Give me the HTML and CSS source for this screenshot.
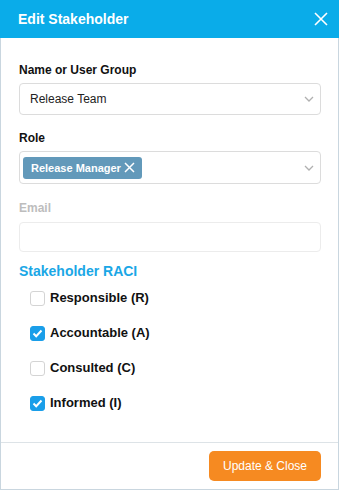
FILE: index.html
```html
<!DOCTYPE html>
<html>
<head>
<meta charset="utf-8">
<link rel="stylesheet" href="styles.css">
</head>
<body>
<div class="modal">
  <div class="header">
    <span class="title">Edit Stakeholder</span>
    <svg class="close" width="14" height="14" viewBox="0 0 14 14"><path d="M1 1L13 13M13 1L1 13" stroke="#fff" stroke-width="1.6" fill="none"/></svg>
  </div>
  <div class="content">
    <div class="label">Name or User Group</div>
    <div class="select">
      <span class="value">Release Team</span>
      <svg class="chev" width="10" height="6" viewBox="0 0 10 6"><path d="M1 1L5 5L9 1" stroke="#b0b0b0" stroke-width="1.3" fill="none"/></svg>
    </div>
    <div class="label gap">Role</div>
    <div class="select multi">
      <span class="tag">Release Manager<svg width="11" height="11" viewBox="0 0 11 11"><path d="M1 1L10 10M10 1L1 10" stroke="#fff" stroke-width="1.5" fill="none"/></svg></span>
      <svg class="chev" width="10" height="6" viewBox="0 0 10 6"><path d="M1 1L5 5L9 1" stroke="#b0b0b0" stroke-width="1.3" fill="none"/></svg>
    </div>
    <div class="label gap muted">Email</div>
    <div class="input"></div>
    <div class="section">Stakeholder RACI</div>
    <div class="checks">
      <div class="row"><span class="box"></span><span>Responsible (R)</span></div>
      <div class="row"><span class="box on"><svg width="11" height="9" viewBox="0 0 11 9"><path d="M1.5 4.5L4.2 7.2L9.5 1.5" stroke="#fff" stroke-width="2" fill="none"/></svg></span><span>Accountable (A)</span></div>
      <div class="row"><span class="box"></span><span>Consulted (C)</span></div>
      <div class="row"><span class="box on"><svg width="11" height="9" viewBox="0 0 11 9"><path d="M1.5 4.5L4.2 7.2L9.5 1.5" stroke="#fff" stroke-width="2" fill="none"/></svg></span><span>Informed (I)</span></div>
    </div>
  </div>
  <div class="footer">
    <button class="btn">Update &amp; Close</button>
  </div>
</div>
</body>
</html>
```

FILE: styles.css
```css
html, body {
  margin: 0;
  padding: 0;
  background: #fff;
}
.modal {
  width: 339px;
  height: 490px;
  box-sizing: border-box;
  border: 1px solid #c9d6df;
  border-top: none;
  display: flex;
  flex-direction: column;
  font-family: "Liberation Sans", Arial, sans-serif;
  color: #111;
}
.header {
  height: 38px;
  background: #0aace9;
  display: flex;
  align-items: center;
  justify-content: space-between;
  padding: 0 11px 0 18px;
  margin: 0 -1px;
}
.title {
  color: #fff;
  font-weight: bold;
  font-size: 14px;
}
.close {
  display: block;
}
.content {
  flex: 1;
  padding: 24px 17px 0 18px;
}
.label {
  font-size: 12px;
  font-weight: bold;
  line-height: 16px;
  margin-bottom: 5px;
}
.label.gap {
  margin-top: 15px;
}
.label.muted {
  color: #bdbdbd;
  margin-top: 16px;
  margin-bottom: 6px;
}
.select {
  height: 32px;
  box-sizing: border-box;
  border: 1px solid #dcdcdc;
  border-radius: 4px;
  display: flex;
  align-items: center;
  justify-content: space-between;
  padding: 0 6px 0 10px;
}
.select .value {
  font-size: 12px;
  color: #222;
}
.select.multi {
  height: 33px;
  padding-left: 3px;
}
.tag {
  height: 22px;
  background: #6299ba;
  border-radius: 3px;
  color: #fff;
  font-size: 11px;
  font-weight: bold;
  display: flex;
  align-items: center;
  gap: 3px;
  padding: 0 7px 0 8px;
}
.tag svg {
  display: block;
}
.chev {
  display: block;
}
.input {
  height: 30px;
  box-sizing: border-box;
  border: 1px solid #ececec;
  border-radius: 4px;
}
.section {
  margin-top: 11px;
  color: #1aa7e6;
  font-weight: bold;
  font-size: 14px;
  line-height: 16px;
}
.checks {
  padding-left: 11px;
  margin-top: 11px;
  display: flex;
  flex-direction: column;
  gap: 19px;
}
.row {
  display: flex;
  align-items: center;
  gap: 5px;
  font-size: 13px;
  font-weight: bold;
  line-height: 16px;
}
.box {
  width: 15px;
  height: 15px;
  box-sizing: border-box;
  border: 1px solid #d4d4d4;
  border-radius: 3px;
  display: flex;
  align-items: center;
  justify-content: center;
}
.box.on {
  background: #1a9ee9;
  border-color: #1a9ee9;
}
.footer {
  border-top: 1px solid #dde3e7;
  height: 46px;
  display: flex;
  align-items: center;
  justify-content: flex-end;
  padding: 0 17px;
}
.btn {
  width: 112px;
  height: 30px;
  background: #f68a21;
  border: none;
  border-radius: 5px;
  color: #fff;
  font-family: "Liberation Sans", Arial, sans-serif;
  font-size: 12px;
}
```
